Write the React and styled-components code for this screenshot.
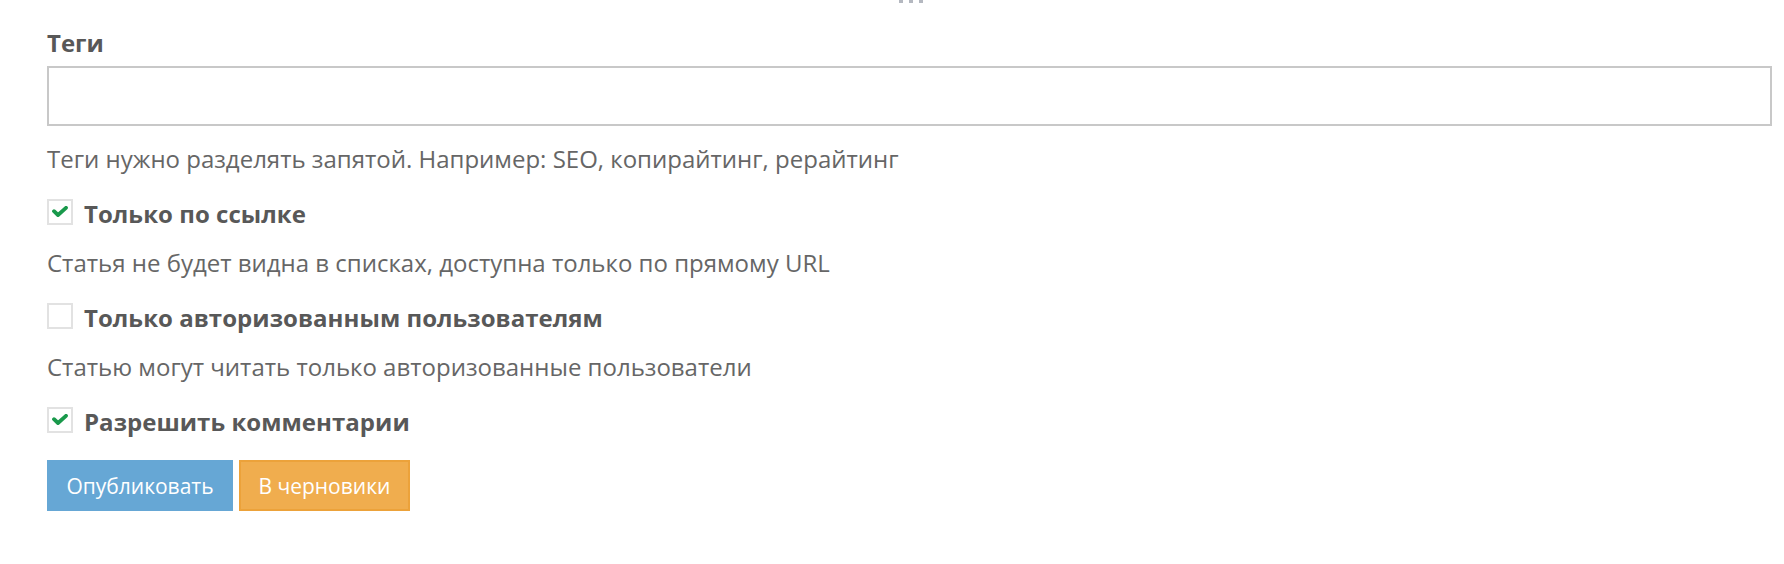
import React from "react";
import styled, { createGlobalStyle } from "styled-components";

const Global = createGlobalStyle`
  html, body { margin: 0; padding: 0; background: #fff; }
  body { font-family: "Open Sans", "Liberation Sans", sans-serif; }
  * { box-sizing: border-box; }
`;

const Page = styled.div`
  display: flex;
  flex-direction: column;
  padding: 0 12px 0 47px;
  height: 564px;
`;

const Grip = styled.div`
  display: flex;
  gap: 6px;
  height: 3px;
  margin-left: 852px;
  margin-bottom: 24px;
`;

const Dot = styled.span`
  width: 4px;
  height: 3px;
  background: #b4b8c0;
`;

const Label = styled.label`
  font-size: 24px;
  font-weight: 700;
  line-height: 32px;
  color: #585858;
`;

const Input = styled.input`
  margin-top: 7px;
  height: 60px;
  width: 100%;
  border: 2px solid #c8c8c8;
  background: #fff;
  outline: none;
  font: inherit;
  font-size: 22px;
  padding: 0 12px;
`;

const Help = styled.p`
  margin: ${(p) => p.$top}px 0 0;
  font-size: 24px;
  line-height: 32px;
  color: #666;
`;

const CheckRow = styled.label`
  display: flex;
  align-items: flex-start;
  gap: 11px;
  margin-top: ${(p) => p.$top}px;
  cursor: pointer;
`;

const Box = styled.span`
  width: 26px;
  height: 26px;
  margin-top: 0.5px;
  flex: none;
  border: 2px solid #e2e2e2;
  background: #fff;
  display: flex;
  align-items: center;
  justify-content: center;
`;

const CheckText = styled.span`
  font-size: 24px;
  font-weight: 700;
  line-height: 32px;
  letter-spacing: 0.04px;
  color: #585858;
`;

const Buttons = styled.div`
  display: flex;
  gap: 6px;
  margin-top: 22px;
`;

const Button = styled.button`
  height: 51px;
  padding: 0 17.4px;
  font-family: "Open Sans", "Liberation Sans", sans-serif;
  font-size: 21px;
  color: #fff;
  cursor: pointer;
  background: ${(p) => (p.$variant === "warning" ? "#f0ad4e" : "#66a7d5")};
  border: 2px solid ${(p) => (p.$variant === "warning" ? "#eca23a" : "#66a7d5")};
`;

const Check = () => (
  <svg width="16" height="11" viewBox="0 0 16 11">
    <path d="M2 5.2 L6 9 L14 1.8" fill="none" stroke="#19994b" strokeWidth="3.8" strokeLinecap="round" strokeLinejoin="round" />
  </svg>
);

const Option = ({ checked, label, top }) => (
  <CheckRow $top={top}>
    <Box>{checked && <Check />}</Box>
    <CheckText>{label}</CheckText>
  </CheckRow>
);

export default function App() {
  return (
    <>
      <Global />
      <Page>
        <Grip>
          <Dot />
          <Dot />
          <Dot />
        </Grip>
        <Label>Теги</Label>
        <Input type="text" />
        <Help $top={17}>Теги нужно разделять запятой. Например: SEO, копирайтинг, рерайтинг</Help>
        <Option checked top={23} label="Только по ссылке" />
        <Help $top={17}>Статья не будет видна в списках, доступна только по прямому URL</Help>
        <Option top={23} label="Только авторизованным пользователям" />
        <Help $top={17}>Статью могут читать только авторизованные пользователи</Help>
        <Option checked top={23} label="Разрешить комментарии" />
        <Buttons>
          <Button>Опубликовать</Button>
          <Button $variant="warning">В черновики</Button>
        </Buttons>
      </Page>
    </>
  );
}
